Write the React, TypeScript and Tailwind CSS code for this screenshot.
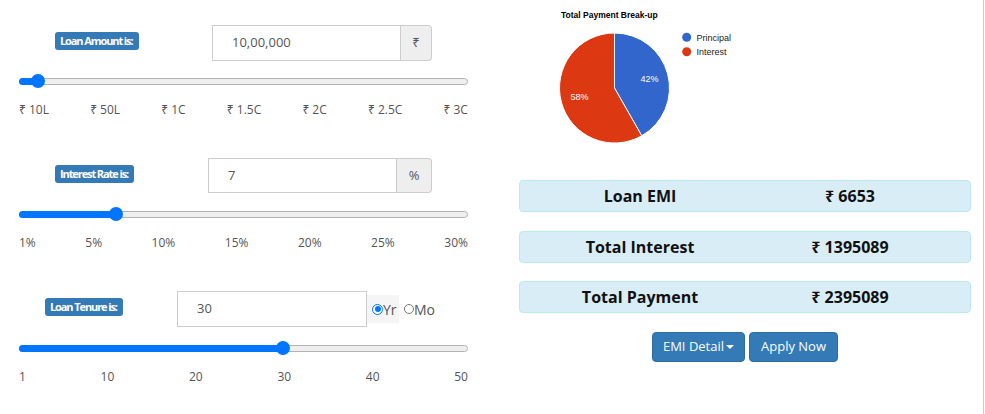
import React from 'react'

const amountTicks = ['₹ 10L', '₹ 50L', '₹ 1C', '₹ 1.5C', '₹ 2C', '₹ 2.5C', '₹ 3C']
const rateTicks = ['1%', '5%', '10%', '15%', '20%', '25%', '30%']
const tenureTicks = ['1', '10', '20', '30', '40', '50']

const results = [
  { label: 'Loan EMI', value: '₹ 6653' },
  { label: 'Total Interest', value: '₹ 1395089' },
  { label: 'Total Payment', value: '₹ 2395089' },
]

function Badge({ children }: { children: React.ReactNode }) {
  return (
    <span className="block h-[18px] rounded-[3px] bg-[#337ab7] pl-[5px] pr-[6px] text-[11px] font-bold leading-[18px] tracking-[-1.1px] text-white">
      {children}
    </span>
  )
}

// fraction = where the thumb sits on the track (0..1)
function Slider({ fraction }: { fraction: number }) {
  const trackWidth = 449
  const thumb = 14
  const center = thumb / 2 + fraction * (trackWidth - thumb)
  return (
    <div className="relative ml-[19px] flex h-[16px] w-[449px] items-center">
      <div className="h-[7px] w-full rounded-full border border-[#b2b2b2] bg-[#efefef]" />
      <div
        className="absolute left-0 top-[4.5px] h-[7px] rounded-l-full bg-[#0075ff]"
        style={{ width: center }}
      />
      <div
        className="absolute top-[1px] h-[14px] w-[14px] rounded-full bg-[#0075ff]"
        style={{ left: center - thumb / 2 }}
      />
    </div>
  )
}

function Ticks({ items }: { items: string[] }) {
  return (
    <div className="ml-[19px] mt-[12px] flex w-[449px] justify-between text-[12px] leading-[17px] text-[#555]">
      {items.map((t) => (
        <span key={t}>{t}</span>
      ))}
    </div>
  )
}

function PieChart() {
  const cx = 74.5
  const cy = 88
  const r = 55
  const principal = 1000000 / 2395089
  const angle = principal * 2 * Math.PI
  const ex = cx + r * Math.sin(angle)
  const ey = cy - r * Math.cos(angle)
  const midA = angle / 2
  const midB = angle + (2 * Math.PI - angle) / 2
  const d = r * 0.66

  return (
    <svg width="200" height="150" viewBox="0 0 200 150" className="ml-[21px] block">
      <text x="21" y="18" fontFamily="'Liberation Sans', Arial, sans-serif" fontSize="8.5" fontWeight="bold" fill="#000">
        Total Payment Break-up
      </text>
      <path d={`M ${cx} ${cy} L ${cx} ${cy - r} A ${r} ${r} 0 0 1 ${ex} ${ey} Z`} fill="#3366cc" stroke="#fff" strokeWidth="1" />
      <path d={`M ${cx} ${cy} L ${ex} ${ey} A ${r} ${r} 0 1 1 ${cx} ${cy - r} Z`} fill="#dc3912" stroke="#fff" strokeWidth="1" />
      <text x={cx + d * Math.sin(midA)} y={cy - d * Math.cos(midA) + 3} textAnchor="middle" fontFamily="'Liberation Sans', Arial, sans-serif" fontSize="9" fill="#fff">
        42%
      </text>
      <text x={cx + d * Math.sin(midB)} y={cy - d * Math.cos(midB) + 3} textAnchor="middle" fontFamily="'Liberation Sans', Arial, sans-serif" fontSize="9" fill="#fff">
        58%
      </text>
      <circle cx="146.7" cy="37.3" r="4.5" fill="#3366cc" />
      <text x="156.5" y="40.5" fontFamily="'Liberation Sans', Arial, sans-serif" fontSize="9" fill="#222">
        Principal
      </text>
      <circle cx="146.7" cy="51.7" r="4.5" fill="#dc3912" />
      <text x="156.5" y="55" fontFamily="'Liberation Sans', Arial, sans-serif" fontSize="9" fill="#222">
        Interest
      </text>
    </svg>
  )
}

export default function App() {
  return (
    <div className="flex h-[414px] w-[984px] border-r border-[#ccc] bg-white font-['Open_Sans','Noto_Sans',sans-serif]">
      {/* Inputs */}
      <div className="w-[490px] pt-[25px]">
        {/* Loan amount */}
        <div className="flex h-[133px] flex-col">
          <div className="flex h-[36px] items-start">
            <div className="flex w-[212px] items-start pl-[55px] pt-[7px]">
              <Badge>Loan Amount is:</Badge>
            </div>
            <div className="flex h-[36px] w-[220px]">
              <div className="flex flex-1 items-center border border-[#ccc] pl-[19px] text-[13px] text-[#555]">10,00,000</div>
              <div className="flex w-[31px] items-center justify-center rounded-r-[4px] border border-l-0 border-[#ccc] bg-[#eee] text-[13px] text-[#555]">
                ₹
              </div>
            </div>
          </div>
          <div className="mt-[12px]">
            <Slider fraction={0.0276} />
          </div>
          <Ticks items={amountTicks} />
        </div>

        {/* Interest rate */}
        <div className="flex h-[133px] flex-col">
          <div className="flex h-[36px] items-start">
            <div className="flex w-[208px] items-start pl-[55px] pt-[7px]">
              <Badge>Interest Rate is:</Badge>
            </div>
            <div className="flex h-[35px] w-[224px]">
              <div className="flex flex-1 items-center border border-[#ccc] pl-[19px] text-[13px] text-[#555]">7</div>
              <div className="flex w-[35px] items-center justify-center rounded-r-[4px] border border-l-0 border-[#ccc] bg-[#eee] text-[13px] text-[#555]">
                %
              </div>
            </div>
          </div>
          <div className="mt-[12px]">
            <Slider fraction={6 / 29} />
          </div>
          <Ticks items={rateTicks} />
        </div>

        {/* Tenure */}
        <div className="flex h-[133px] flex-col">
          <div className="flex h-[36px] items-start">
            <div className="flex w-[177px] items-start pl-[45px] pt-[7px]">
              <Badge>Loan Tenure is:</Badge>
            </div>
            <div className="flex h-[36px] w-[190px] items-center border border-[#ccc] pl-[19px] text-[13px] text-[#555]">30</div>
            <div className="mt-[4px] flex h-[28px] w-[32px] items-center bg-[#f5f5f5] pl-[5px] text-[14px] text-[#555]">
              <span className="flex h-[11px] w-[11px] items-center justify-center rounded-full border-[1.5px] border-[#0075ff] bg-white">
                <span className="h-[6px] w-[6px] rounded-full bg-[#0075ff]" />
              </span>
              <span>Yr</span>
            </div>
            <div className="mt-[4px] flex h-[28px] items-center pl-[5px] text-[14px] text-[#555]">
              <span className="h-[10px] w-[10px] rounded-full border border-[#767676] bg-white" />
              <span>Mo</span>
            </div>
          </div>
          <div className="mt-[13px]">
            <Slider fraction={29 / 49} />
          </div>
          <Ticks items={tenureTicks} />
        </div>
      </div>

      {/* Results */}
      <div className="flex-1 pl-[29px] pr-[12px]">
        <PieChart />
        <div className="mt-[30px] flex flex-col gap-[18.5px]">
          {results.map((r) => (
            <div
              key={r.label}
              className="grid h-[32px] grid-cols-2 items-center rounded-[4px] border border-[#bce8f1] bg-[#d9edf7] px-[15px] text-center text-[16px] font-bold text-[#111]"
            >
              <span>{r.label}</span>
              <span>{r.value}</span>
            </div>
          ))}
        </div>
        <div className="mt-[19px] flex justify-center gap-[4px]">
          <button className="flex h-[30px] w-[93px] items-center justify-center gap-[2px] rounded-[4px] border border-[#2e6da4] bg-[#337ab7] text-[13px] text-white">
            EMI Detail
            <span className="h-0 w-0 border-x-[4px] border-t-[4px] border-x-transparent border-t-white" />
          </button>
          <button className="h-[30px] w-[89px] rounded-[4px] border border-[#2e6da4] bg-[#337ab7] text-[13px] text-white">
            Apply Now
          </button>
        </div>
      </div>
    </div>
  )
}
